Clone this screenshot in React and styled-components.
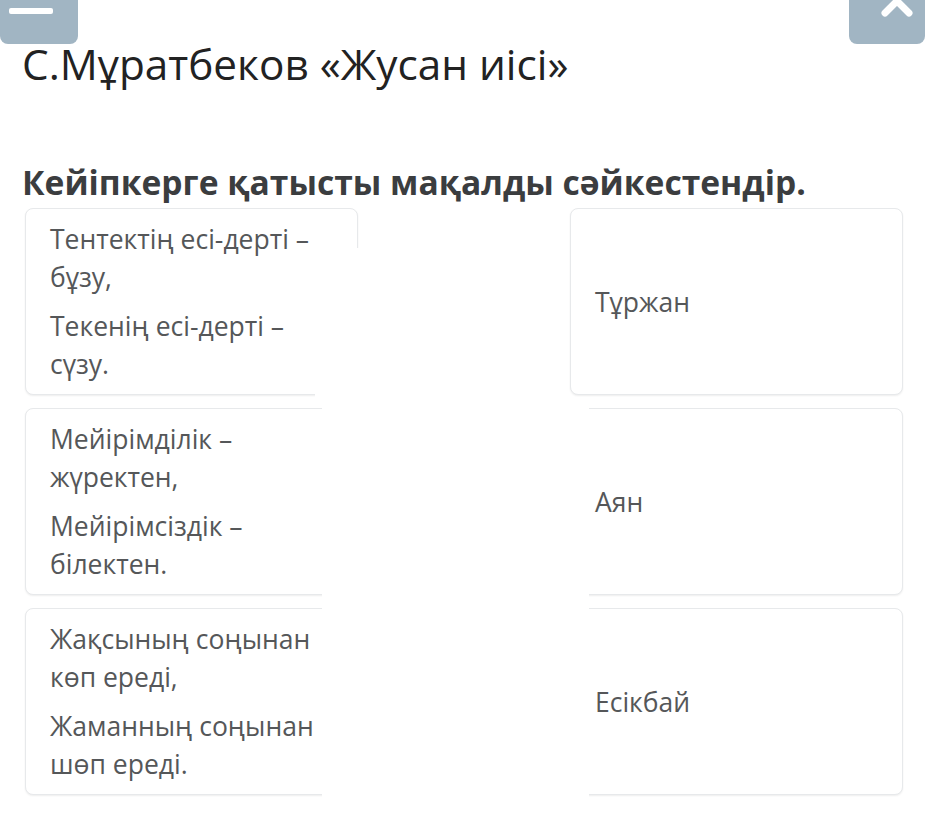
import React from "react";
import styled, { createGlobalStyle } from "styled-components";

const Global = createGlobalStyle`
  html, body { margin: 0; padding: 0; background: #fff; }
  body { font-family: "Open Sans", "Noto Sans", sans-serif; overflow: hidden; }
  * { box-sizing: border-box; }
`;

const Page = styled.div`
  width: 925px;
  height: 831px;
  padding: 0 22px 0 25px;
  position: relative;
`;

const Header = styled.div`
  display: flex;
  justify-content: space-between;
  height: 44px;
  margin: 0 -22px 0 -25px;
`;

const TopButton = styled.div`
  width: ${(p) => p.$w}px;
  height: 44px;
  background: #a1b5c3;
  border-radius: 0 0 8px 8px;
  display: flex;
`;

const Title = styled.h1`
  margin: -3px 0 0 -3px;
  font-size: 42.3px;
  line-height: 46px;
  font-weight: 400;
  color: #222;
`;

const Question = styled.h2`
  margin: 73px 0 0 -3px;
  font-size: 33.6px;
  line-height: 44px;
  font-weight: 700;
  color: #3b3d3f;
`;

const Board = styled.div`
  margin-top: 4px;
  display: grid;
  grid-template-columns: 333px 1fr 333px;
  grid-auto-rows: 187px;
  row-gap: 13px;
  position: relative;
`;

const Card = styled.div`
  grid-column: ${(p) => (p.$side === "left" ? 1 : 3)};
  background: #fff;
  border: 1px solid #e7e9eb;
  border-radius: 8px;
  box-shadow: 0 1px 2px rgba(0, 0, 0, 0.07);
  padding: 10px 30px 10px 24px;
  display: flex;
  flex-direction: column;
  justify-content: center;
  font-size: 26.5px;
  line-height: 38px;
  color: #555759;
`;

const Line = styled.p`
  margin: 0;
  & + & { margin-top: 11px; }
`;

const Mask = styled.div`
  position: absolute;
  background: #fff;
  left: ${(p) => p.$x}px;
  top: ${(p) => p.$y}px;
  width: ${(p) => p.$w}px;
  height: ${(p) => p.$h}px;
`;

const rows = [
  { left: ["Тентектің есі-дерті – бұзу,", "Текенің есі-дерті – сүзу."], right: "Тұржан" },
  { left: ["Мейірімділік – жүректен,", "Мейірімсіздік – білектен."], right: "Аян" },
  { left: ["Жақсының соңынан көп ереді,", "Жаманның соңынан шөп ереді."], right: "Есікбай" },
];

export default function App() {
  return (
    <>
      <Global />
      <Page>
        <Header>
          <TopButton $w={78}>
            <svg width="78" height="44" viewBox="0 0 78 44">
              <rect x="9" y="-6" width="44" height="6" rx="2" fill="#fff" />
              <rect x="9" y="8" width="44" height="6" rx="2" fill="#fff" />
            </svg>
          </TopButton>
          <TopButton $w={76}>
            <svg width="76" height="44" viewBox="0 0 76 44">
              <polyline
                points="36,13 48,1 60,13"
                fill="none"
                stroke="#fff"
                strokeWidth="7"
                strokeLinecap="round"
                strokeLinejoin="round"
              />
            </svg>
          </TopButton>
        </Header>
        <Title>С.Мұратбеков «Жусан иісі»</Title>
        <Question>Кейіпкерге қатысты мақалды сәйкестендір.</Question>
        <Board>
          {rows.map((r, i) => (
            <React.Fragment key={i}>
              <Card $side="left">
                {r.left.map((t, j) => (
                  <Line key={j}>{t}</Line>
                ))}
              </Card>
              <Card $side="right">
                <Line>{r.right}</Line>
              </Card>
            </React.Fragment>
          ))}
          <Mask $x={290} $y={40} $w={252} $h={153} />
          <Mask $x={297} $y={192} $w={267} $h={440} />
        </Board>
      </Page>
    </>
  );
}
